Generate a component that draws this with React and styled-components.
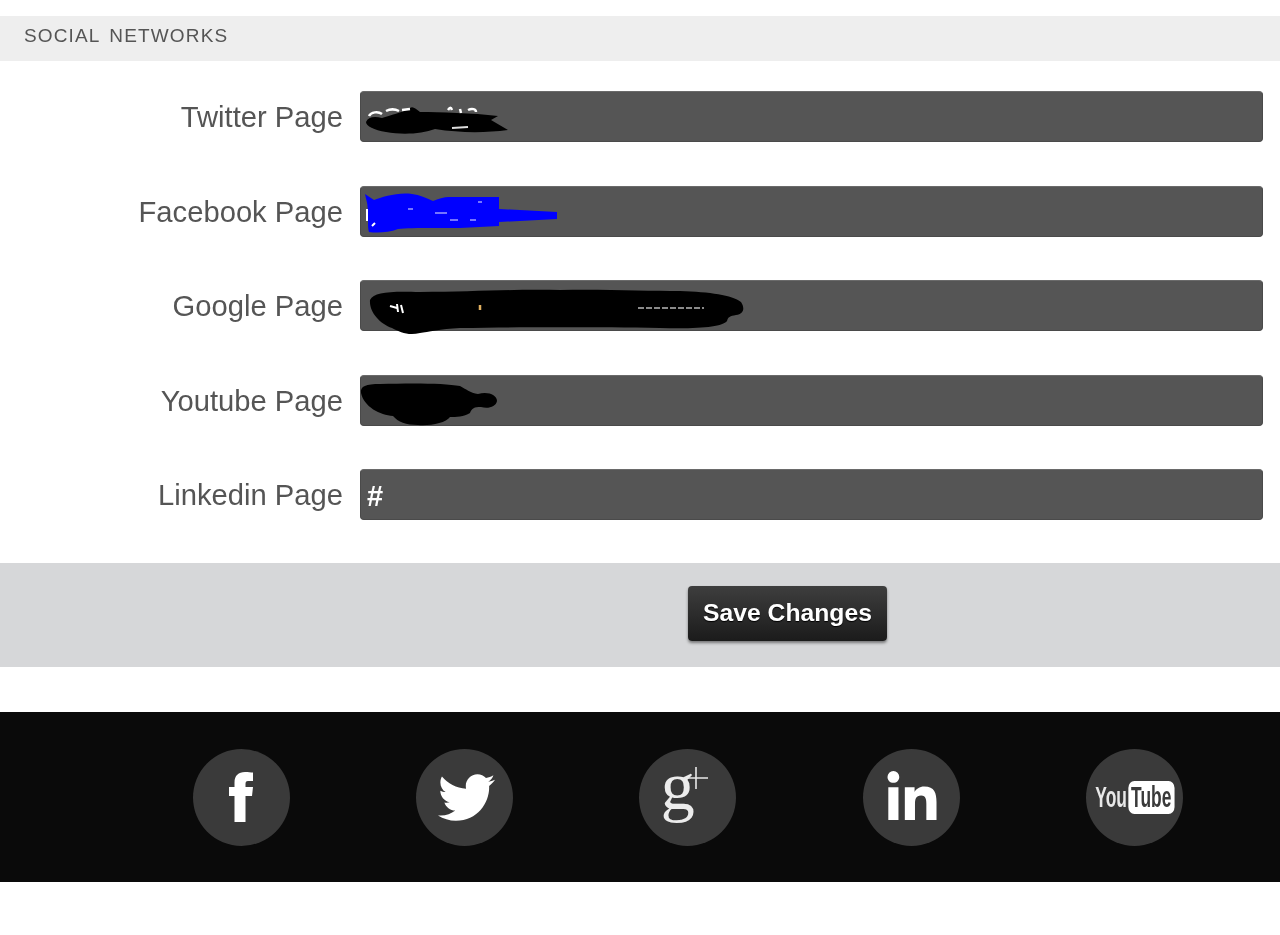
import React from "react";
import styled, { createGlobalStyle } from "styled-components";
import { FaTwitter, FaLinkedinIn } from "react-icons/fa";

const Global = createGlobalStyle`
  html, body { margin: 0; background: #fff; }
  body { font-family: "Liberation Sans", Arial, sans-serif; }
`;

const Page = styled.div`
  padding-top: 16px;
  height: 919px;
  filter: blur(0.5px);
  overflow: hidden;
`;

const SectionTitle = styled.h2`
  box-sizing: border-box;
  margin: 0;
  height: 45px;
  padding: 0 0 6px 24px;
  display: flex;
  align-items: center;
  background: #eeeeee;
  color: #555;
  font-size: 19px;
  font-weight: 400;
  letter-spacing: 1.15px;
  word-spacing: 3px;
`;

const Form = styled.form`
  display: flex;
  flex-direction: column;
  gap: 43.5px;
  padding: 30px 17px 43px 0;
`;

const Row = styled.div`
  display: flex;
  align-items: center;
  gap: 17px;
`;

const Label = styled.label`
  box-sizing: border-box;
  width: 343px;
  height: 51px;
  padding-top: 1px;
  flex: none;
  text-align: right;
  color: #555;
  font-size: 29.2px;
  line-height: 51px;
`;

const FieldWrap = styled.div`
  position: relative;
  flex: 1;
  height: 51px;
`;

const Input = styled.input`
  box-sizing: border-box;
  width: 100%;
  height: 100%;
  padding: 3px 6px 0;
  background: #555555;
  border: 1px solid #4a4a4a;
  border-top-color: #6a6a6a;
  border-radius: 4px;
  color: #fff;
  font-family: "Liberation Sans", Arial, sans-serif;
  font-size: 29px;
  font-weight: 700;
  outline: none;
`;

const Scribble = styled.svg`
  position: absolute;
  left: 0;
  top: 0;
  width: 100%;
  height: 100%;
  overflow: visible;
  pointer-events: none;
`;

const ActionBar = styled.div`
  box-sizing: border-box;
  height: 104px;
  padding: 0 0 4px 688px;
  display: flex;
  align-items: center;
  background: #d6d7d9;
`;

const SaveButton = styled.button`
  width: 199px;
  height: 55px;
  padding: 0;
  border: 0;
  border-radius: 4px;
  background: linear-gradient(#3e3e3e, #1b1b1b);
  box-shadow: 0 2px 3px rgba(0, 0, 0, 0.45);
  color: #fff;
  font-family: "Liberation Sans", Arial, sans-serif;
  font-size: 24.7px;
  font-weight: 700;
  text-shadow: 0 1px 1px #000;
`;

const Footer = styled.footer`
  margin-top: 45px;
  height: 170px;
  padding-left: 192.5px;
  display: flex;
  align-items: center;
  gap: 126.4px;
  background: #0a0a0a;
`;

const Circle = styled.a`
  position: relative;
  flex: none;
  width: 97px;
  height: 97px;
  border-radius: 50%;
  background: #3a3a3a;
  color: #fff;
  display: flex;
  align-items: center;
  justify-content: center;
`;

const BirdIcon = styled(FaTwitter)`
  margin-left: 5px;
`;

const InIcon = styled(FaLinkedinIn)`
  margin: 3px 0 0 2px;
`;

const GLetter = styled.span`
  font-family: "Liberation Serif", serif;
  font-size: 68px;
  line-height: 1;
  color: #ececec;
  margin: -23px 20px 0 0;
`;

const Plus = styled.svg`
  position: absolute;
  left: 45px;
  top: 17px;
`;

const YouTubeMark = styled.span`
  display: inline-flex;
  align-items: center;
  flex: none;
  transform: scaleX(0.6);
  font-size: 29px;
  font-weight: 700;
  color: #e8e8e8;
`;

const TubeBox = styled.span`
  margin-left: 2px;
  padding: 0 5px;
  line-height: 33px;
  border-radius: 10px / 7px;
  background: #fff;
  color: #3a3a3a;
`;

const fields = [
  {
    name: "Twitter Page",
    scribble: (
      <>
        <path d="M6 31C8 26 14 25 22 27C30 24 42 22 50 17C53 15 56 18 60 21C80 21 112 22 138 25L131 29L148 39C125 42 100 42 75 38C62 43 42 44 26 41C14 39 6 35 6 31Z" fill="#000" />
        <path d="M9 25c2-4 9-5 13-2M26 20c4-2 9-2 13 0M42 19l8-1M88 19c2-3 3-3 4 0M100 18l1 4M108 19c4-2 8-1 8 2" stroke="#fff" strokeWidth="2.5" fill="none" />
        <path d="M92 37l16-1" stroke="#ddd" strokeWidth="2" />
      </>
    ),
  },
  {
    name: "Facebook Page",
    scribble: (
      <>
        <path d="M5 8L14 14C22 11 38 6 52 8C60 9 66 12 73 15C78 13 84 11 89 11H139V23L197 26V33L139 36V40L100 42H73C58 42 45 42 38 43C28 47 16 47 9 46C7 40 9 34 7 28C9 20 6 14 5 8Z" fill="#0000ff" />
        <path d="M7 23v12M12 40l3-3" stroke="#fff" strokeWidth="2" />
        <path d="M75 27h12M48 23h5M118 16h4M90 34h8M110 34h6" stroke="#9c9cff" strokeWidth="1.5" />
      </>
    ),
  },
  {
    name: "Google Page",
    scribble: (
      <>
        <path d="M10 20C14 12 30 11 60 12C110 12 150 9 200 10C240 9 290 11 320 11C350 12 372 15 381 22C385 28 384 34 376 35C370 36 368 37 367 41C362 47 340 49 300 48C240 47 160 47 100 48C80 49 68 52 60 53C48 56 40 52 32 48C20 44 9 32 10 20Z" fill="#000" />
        <path d="M30 26l7 2M37 24l1 8M41 25l2 8" stroke="#fff" strokeWidth="2" />
        <path d="M120 25v5" stroke="#e0b060" strokeWidth="2.5" />
        <path d="M278 28h66" stroke="#b8b8b8" strokeWidth="1.5" strokeDasharray="6 2" />
      </>
    ),
  },
  {
    name: "Youtube Page",
    scribble: (
      <path d="M1 18C0 11 6 9 20 9C50 8 85 8 100 11C106 14 110 18 118 19C128 16 137 20 137 26C136 32 128 34 121 32C114 32 112 33 110 38C104 42 96 42 90 42C86 48 70 51 58 50C46 50 38 47 33 41C20 40 4 32 1 18Z" fill="#000" />
    ),
  },
  { name: "Linkedin Page", value: "#" },
];

export default function App() {
  return (
    <Page>
      <Global />
      <SectionTitle>SOCIAL NETWORKS</SectionTitle>
      <Form>
        {fields.map((f) => (
          <Row key={f.name}>
            <Label>{f.name}</Label>
            <FieldWrap>
              <Input readOnly value={f.value || ""} aria-label={f.name} />
              {f.scribble && <Scribble>{f.scribble}</Scribble>}
            </FieldWrap>
          </Row>
        ))}
      </Form>
      <ActionBar>
        <SaveButton type="button">Save Changes</SaveButton>
      </ActionBar>
      <Footer>
        <Circle aria-label="Facebook">
          <svg width="24" height="50" viewBox="0 0 24 50" fill="#fff">
            <path d="M5.5 50V24H0V15H5.5V10.5C5.5 3.5 9.5 0 16 0C19 0 22 .3 24 .6V9H19C17 9 16.5 10 16.5 12V15H24L23 24H16.5V50Z" />
          </svg>
        </Circle>
        <Circle aria-label="Twitter">
          <BirdIcon size={57} />
        </Circle>
        <Circle aria-label="Google Plus">
          <GLetter>g</GLetter>
          <Plus width="24" height="24" viewBox="0 0 24 24">
            <path d="M12 1V23M0 12H24" stroke="#e8e8e8" strokeWidth="1.6" />
          </Plus>
        </Circle>
        <Circle aria-label="LinkedIn">
          <InIcon size={56} />
        </Circle>
        <Circle aria-label="YouTube">
          <YouTubeMark>
            You<TubeBox>Tube</TubeBox>
          </YouTubeMark>
        </Circle>
      </Footer>
    </Page>
  );
}
